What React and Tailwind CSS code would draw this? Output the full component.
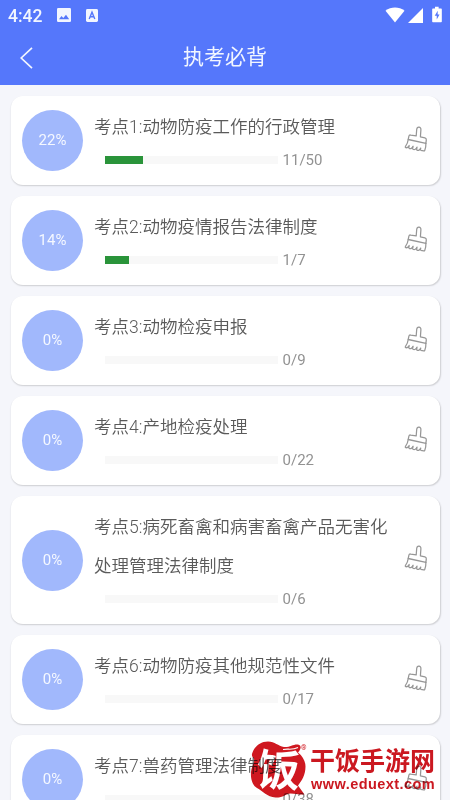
import clsx from 'clsx';

const chapters = [
  { title: '考点1:动物防疫工作的行政管理', done: 11, total: 50 },
  { title: '考点2:动物疫情报告法律制度', done: 1, total: 7 },
  { title: '考点3:动物检疫申报', done: 0, total: 9 },
  { title: '考点4:产地检疫处理', done: 0, total: 22 },
  { title: '考点5:病死畜禽和病害畜禽产品无害化处理管理法律制度', done: 0, total: 6 },
  { title: '考点6:动物防疫其他规范性文件', done: 0, total: 17 },
  { title: '考点7:兽药管理法律制度', done: 0, total: 38 },
];

function StatusBar() {
  return (
    <div className="flex h-[30px] items-center pl-[8px] pr-[7px] text-[#f2f6ff]">
      <span className="w-[49px] pt-[2px] text-[17.5px] leading-[28px] font-medium">4:42</span>
      <svg className="h-[14px] w-[14px]" viewBox="0 0 14 14">
        <rect width="14" height="14" rx="1.2" fill="currentColor" />
        <path d="M2 11.2L4.500 8l1.800 2.100L9 6.700l3.200 4.500z" fill="#5577fb" />
      </svg>
      <svg className="ml-[15px] h-[13px] w-[12px]" viewBox="0 0 12 13">
        <rect width="12" height="13" rx="1.4" fill="currentColor" />
        <path d="M3.200 10L6 3.200 8.800 10M4.200 7.800h3.600" fill="none" stroke="#5577fb" strokeWidth="1.4" />
      </svg>
      <div className="grow" />
      <svg className="h-[16px] w-[20px]" viewBox="0 0 20 16">
        <path d="M.5 3.800C6-.5 14-.5 19.500 3.800L10 15.500z" fill="#fff" />
      </svg>
      <svg className="ml-[3px] h-[15px] w-[15px]" viewBox="0 0 15 15">
        <path d="M15 0v15H0z" fill="#fff" />
      </svg>
      <svg className="mr-[1px] mb-[1px] ml-[9px] h-[17px] w-[10px]" viewBox="0 0 11 17">
        <path d="M3.300 0h4v2H10a.8.8 0 0 1 .8.800v13.400a.8.8 0 0 1-.8.800H1a.8.8 0 0 1-.8-.8V2.800A.8.8 0 0 1 1 2h2.300z" fill="#fff" />
        <path d="M6.300 4.500L3 10h2.200v4L8.300 8.500H6.200z" fill="#5577fb" />
      </svg>
    </div>
  );
}

function Header() {
  return (
    <header className="h-[85px] shrink-0 bg-[#5577fb]">
      <StatusBar />
      <div className="grid h-[55px] grid-cols-[1fr_auto_1fr] items-center">
        <svg className="ml-[20px] h-[22px] w-[13px]" viewBox="0 0 13 22" fill="none" stroke="#f2f6ff" strokeWidth="1.7">
          <path d="M12 .8L1.200 11 12 21.200" />
        </svg>
        <h1 className="pb-[2px] text-[21px] leading-[30px] text-[#f2f6ff]">执考必背</h1>
        <div />
      </div>
    </header>
  );
}

function Broom() {
  return (
    <svg className="h-[27px] w-[24px] shrink-0" viewBox="0 0 24 26" preserveAspectRatio="none" fill="none" stroke="#979797" strokeWidth="1.25" strokeLinejoin="round" strokeLinecap="round">
      <path d="M4.200 13l.7-3.200c.2-.9.900-1.300 1.800-1.100l5.500.8.500-6.100c.3-3.200 4.500-2.800 4.200.2l-.5 6.900 4.500 1c1 .2 1.500.9 1.400 1.900l-.4 3.300z" />
      <path d="M4.200 13c-.3 2.700-1.100 4.700-2.700 6.700-.4.500-.2 1 .3 1.100 1.500.4 2.800-.5 3.400-2-.2 1.500-.5 2.400-.1 2.700 1.500.9 3.200-.1 4-2-.4 1.600-.6 2.600-.1 2.900 1.500.8 3.200-.2 4-2-.3 1.600-.5 2.600 0 2.900 1.500.7 3-.3 3.700-2-.2 1.400-.3 1.900.2 2.100l2.700.6c.6.100 1-.1 1.200-.7.900-2.200 1.200-4.200 1.100-6.600" />
    </svg>
  );
}

function ChapterCard({ title, done, total }) {
  const percent = Math.round((done / total) * 100);

  return (
    <li className="flex shrink-0 items-center rounded-[12px] bg-white py-[10px] pr-[12px] pl-[11px] shadow-[0.5px_1px_1.500px_rgba(0,0,0,0.16)]">
      <div className="flex h-[61px] w-[61px] shrink-0 items-center justify-center rounded-full bg-[#a1b8fc] text-[15px] text-[#f5f8ff]">
        {percent}%
      </div>
      <div className="ml-[11px] w-[304px] shrink-0">
        <h2 className="pt-[2px] text-[17.5px] leading-[39px] font-[350] text-[#5a5a5a]">{title}</h2>
        <div className="flex h-[28px] items-center pb-[2px] pl-[11px]">
          <div className="h-[8px] w-[173px] bg-[#f8f8f8]">
            <div className={clsx('h-full', done > 0 && 'bg-[#2a943a]')} style={{ width: `${percent}%` }} />
          </div>
          <span className="ml-[4.5px] text-[15px] text-[#929292]">{done}/{total}</span>
        </div>
      </div>
      <div className="ml-auto pb-[3px]">
        <Broom />
      </div>
    </li>
  );
}

function Watermark() {
  return (
    <div className="absolute top-[740px] left-[249px] flex mix-blend-multiply">
      <svg className="h-[60px] w-[60px]" viewBox="0 0 60 60">
        <path
          d="M3 14C5 7 11 1.500 19 1.500c7 0 10 4.500 16 5.500 6 .5 9-3 14-2.500 4 .8 3 5 0 8 5 4 7.500 9 7.500 14 0 8-3.500 14-7.500 19l6.500 9c-5 .5-9-1-14-1-5 .5-8 4.500-15 4C18 57 14 51 8 48 3 45 1.500 38 2 32 2.500 26 6 23 5 19 4.500 17 2.500 17 3 14z"
          fill="#cf1820"
        />
        <text x="8" y="46" fontSize="43" fontWeight="700" fill="#fff" transform="rotate(3 30 30)">饭</text>
        <path d="M34 9.500c6-1 9 1 15-2" fill="none" stroke="#fff" strokeWidth="1.200" />
        <text x="52" y="10" fontSize="7" fill="#cf1820">®</text>
      </svg>
      <div className="ml-[1px] pt-[7px] text-[#cb1820]">
        <div className="text-[25px] leading-[30px] font-bold whitespace-nowrap">干饭手游网</div>
        <div className="pl-[1px] font-['Liberation_Sans'] text-[14.5px] leading-[14px] font-bold tracking-[0.45px]">www.eduext.com</div>
      </div>
    </div>
  );
}

export default function App() {
  return (
    <div className="relative flex h-[800px] w-[450px] flex-col overflow-hidden bg-[#f5f6fb] font-[Roboto,'Noto_Sans_CJK_SC',sans-serif]">
      <Header />
      <ul className="flex flex-col gap-[11px] pt-[11px] pr-[10px] pl-[11px]">
        {chapters.map((c) => (
          <ChapterCard key={c.title} {...c} />
        ))}
      </ul>
      <Watermark />
    </div>
  );
}
